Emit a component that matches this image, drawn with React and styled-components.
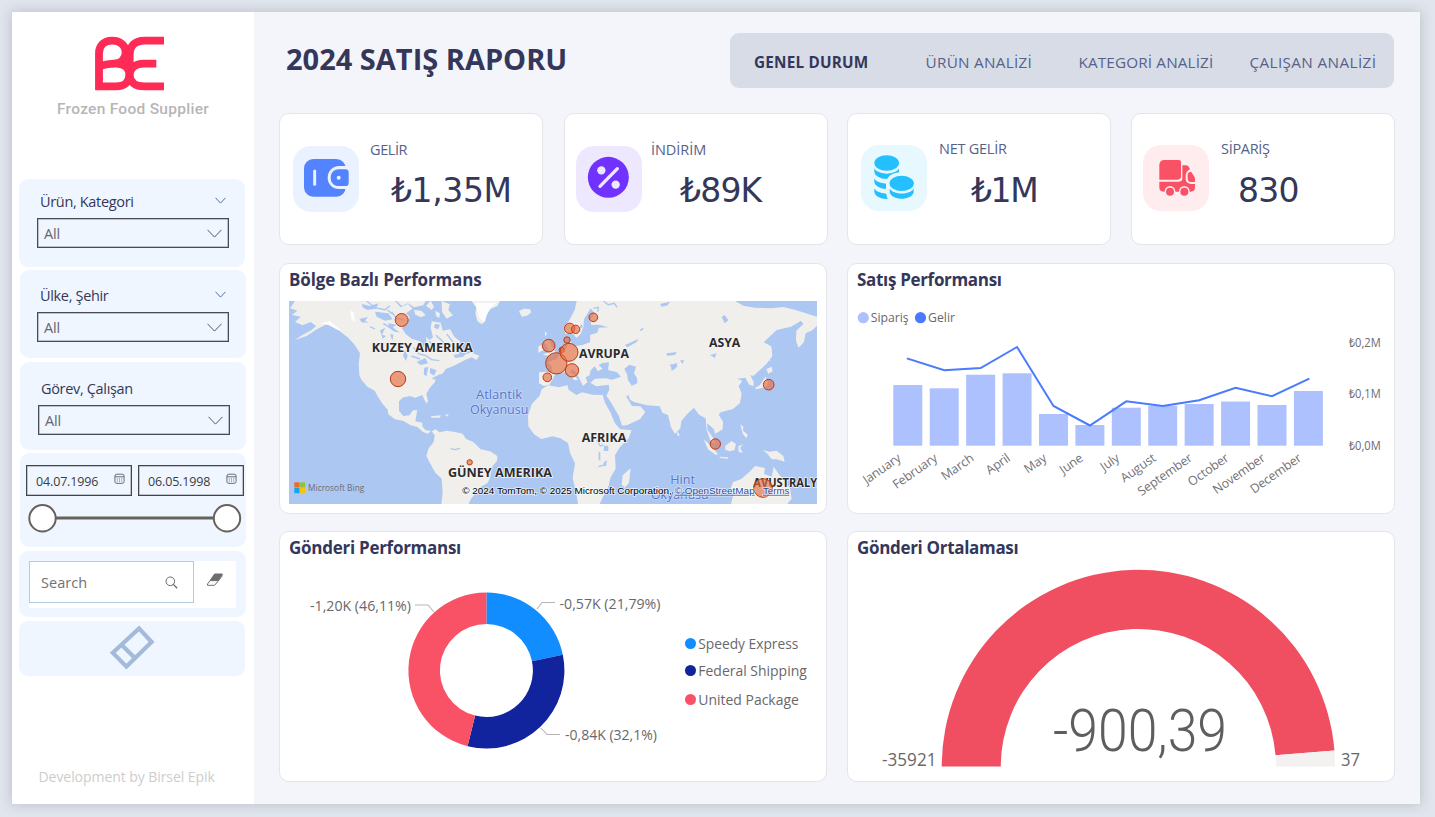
import React from "react";
import styled, { createGlobalStyle } from "styled-components";

const ui = `"Open Sans", "Noto Sans", sans-serif`;

const GlobalStyle = createGlobalStyle`
  * { box-sizing: border-box; }
  body { margin: 0; background: #e1e6ee; font-family: ${ui}; overflow: hidden; }
  svg { display: block; }
`;

const Page = styled.div`
  width: 1435px;
  height: 817px;
  padding: 12px 15px 13px 12px;
`;
const Report = styled.div`
  display: flex;
  width: 1408px;
  height: 792px;
  background: #f4f5fb;
  box-shadow: 0 0 12px 1px rgba(0, 0, 0, 0.16);
`;

/* ---------- sidebar ---------- */
const Sidebar = styled.aside`
  width: 242px;
  height: 100%;
  background: #fff;
  display: flex;
  flex-direction: column;
  padding-left: 7px;
`;
const Brand = styled.div`
  height: 167px;
  padding: 24px 0 0 38px;
`;
const BrandMark = styled.svg`
  width: 70px;
  height: 55px;
  margin-left: 37.5px;
`;
const BrandName = styled.div`
  margin-top: 8px;
  font: 500 15.5px/20px Roboto, sans-serif;
  letter-spacing: 0.28px;
  color: #b6b6b6;
  white-space: nowrap;
`;
const Panel = styled.section`
  width: ${(p) => p.$w || 226}px;
  height: ${(p) => p.$h}px;
  margin: 0 0 ${(p) => p.$gap || 0}px ${(p) => p.$shift || 0}px;
  padding: ${(p) => p.$pad || "0"};
  border-radius: 9px;
  background: #eff6ff;
  flex: none;
`;
const SlicerHead = styled.div`
  display: flex;
  justify-content: space-between;
  align-items: center;
  height: 20px;
  padding: 0 ${(p) => p.$end}px 0 ${(p) => p.$inset}px;
  font-size: 14.5px;
  line-height: 20px;
  letter-spacing: -0.33px;
  color: #34375a;
`;
const HeadArrow = styled.span`
  padding-bottom: 4px;
`;
const Select = styled.div`
  display: flex;
  align-items: center;
  justify-content: space-between;
  width: 192px;
  height: 30px;
  margin: ${(p) => p.$top}px 0 0 ${(p) => p.$left}px;
  padding: 1px 6px 0 6px;
  border: 1px solid #494b52;
  box-shadow: inset 0 0 0 0.5px #8d9096;
  font-size: 14.5px;
  letter-spacing: -0.2px;
  color: #66666a;
`;
const DateRow = styled.div`
  display: flex;
  gap: 6px;
`;
const DateBox = styled.div`
  display: flex;
  justify-content: space-between;
  width: 106px;
  height: 31px;
  padding: 6px 5px 0 9px;
  border: 1px solid #43454b;
  box-shadow: inset 0 0 0 0.5px #8d9096;
  font-size: 12.5px;
  line-height: 19px;
  letter-spacing: -0.15px;
  color: #3c3c40;
`;
const RangeSlider = styled.svg`
  width: 216px;
  height: 34px;
  margin-top: 5px;
`;
const SearchArea = styled.div`
  display: flex;
  width: 207px;
  height: 47px;
  background: #fff;
`;
const SearchBox = styled.div`
  display: flex;
  align-items: center;
  justify-content: space-between;
  width: 165px;
  height: 42px;
  padding: 0 15px 0 11px;
  border: 1px solid #b6cade;
  font-size: 14.5px;
  letter-spacing: 0.05px;
  color: #717175;
`;
const ClearSearch = styled.div`
  padding: 12px 0 0 12px;
`;
const Credit = styled.div`
  margin: 91px 0 0 19.5px;
  font-size: 14px;
  line-height: 20px;
  letter-spacing: -0.06px;
  color: #cdcdcd;
  white-space: nowrap;
`;

/* ---------- main area ---------- */
const Main = styled.main`
  flex: 1;
  padding: 21px 0 0 25px;
`;
const Header = styled.header`
  display: flex;
  justify-content: space-between;
  width: 1115px;
  height: 80px;
`;
const Title = styled.h1`
  margin: 6px 0 0 7px;
  font-size: 29px;
  line-height: 40px;
  font-weight: 700;
  letter-spacing: 0px;
  color: #34375a;
  white-space: nowrap;
`;
const Nav = styled.nav`
  display: grid;
  grid-template-columns: 171.5px 153px 171px 1fr;
  align-items: center;
  width: 664px;
  height: 55px;
  padding: 2px 0 0 24px;
  border-radius: 9px;
  background: #d8dce7;
`;
const NavItem = styled.a`
  font-size: 15.3px;
  font-weight: ${(p) => (p.$active ? 700 : 400)};
  letter-spacing: ${(p) => p.$ls}px;
  color: ${(p) => (p.$active ? "#34375a" : "#56628a")};
  white-space: nowrap;
`;
const KpiGrid = styled.div`
  display: grid;
  grid-template-columns: 285px 283px 284px 264px;
  height: 150px;
`;
const KpiCard = styled.article`
  display: flex;
  width: 264px;
  height: 132px;
  padding-left: ${(p) => p.$pad}px;
  border: 1px solid #e5e5e8;
  border-radius: 10px;
  background: #fff;
`;
const IconTile = styled.div`
  flex: none;
  width: 66px;
  height: 66px;
  margin-top: ${(p) => p.$top}px;
  border-radius: 18px;
  background: ${(p) => p.$bg};
`;
const KpiText = styled.div`
  padding: ${(p) => p.$top}px 0 0 ${(p) => p.$gap}px;
`;
const KpiLabel = styled.div`
  font-size: 14.5px;
  line-height: 20px;
  letter-spacing: ${(p) => p.$ls}px;
  color: #56628a;
  white-space: nowrap;
`;
const KpiValue = styled.div`
  margin: ${(p) => p.$top}px 0 0 ${(p) => p.$shift}px;
  font: 400 33px/40px "DejaVu Sans", Verdana, sans-serif;
  letter-spacing: ${(p) => p.$ls}px;
  color: #34375a;
  white-space: nowrap;
`;
const ChartGrid = styled.div`
  display: grid;
  grid-template-columns: 548px 548px;
  gap: 17px 20px;
`;
const ChartCard = styled.section`
  height: 251px;
  border: 1px solid #e5e5e8;
  border-radius: 10px;
  background: #fff;
  overflow: hidden;
`;
const ChartTitle = styled.h2`
  margin: 4px 0 9px 9px;
  font-size: 17px;
  line-height: 24px;
  font-weight: 700;
  letter-spacing: ${(p) => p.$ls}px;
  color: #34375a;
`;
const MapFrame = styled.svg`
  width: 528px;
  height: 203px;
  margin-left: 9px;
`;

/* ---------- small icons ---------- */
const Chevron = ({ w, h, color = "#5b6b85" }) => (
  <svg width={w} height={h} viewBox={`0 0 ${w} ${h}`}>
    <path d={`M0.5 0.8 L${w / 2} ${h - 0.9} L${w - 0.5} 0.8`} fill="none" stroke={color} strokeWidth="1" />
  </svg>
);
const CalendarIcon = () => (
  <svg width="12" height="13" viewBox="0 -1 12 13">
    <rect x="0.9" y="1.2" width="9.2" height="9.2" rx="2" fill="none" stroke="#5b5d66" strokeWidth="0.9" />
    <path d="M1 3.8H10" stroke="#5b5d66" strokeWidth="0.9" />
    <path d="M5 6H6M7.2 6H8.2M2.8 8.1H3.8M5 8.1H6M2.8 6H3.8M7.2 8.1H8.2" stroke="#5b5d66" strokeWidth="0.9" />
  </svg>
);
const SearchIcon = () => (
  <svg width="13" height="13" viewBox="0 0 13 13">
    <circle cx="5.3" cy="5.3" r="4.3" fill="none" stroke="#68686c" />
    <path d="M8.3 8.4L12.2 12.3" stroke="#68686c" strokeWidth="1.3" />
  </svg>
);
const SmallEraser = () => (
  <svg width="18" height="14" viewBox="0 0 18 14">
    <path d="M8.6 1H16.5L12 7.6H4.1Z" fill="#6e6e6e" stroke="#6e6e6e" strokeLinejoin="round" />
    <path d="M4.1 7.6L1.5 11V12.3H8.6L12 8.2L16.5 2.6" fill="none" stroke="#6e6e6e" strokeLinejoin="round" />
  </svg>
);
const BigEraser = () => (
  <svg width="46" height="46" viewBox="0 0 46 46">
    <path d="M30 3.4L42.6 17L17.4 41.6L3.8 27.8Z M12.6 19.8L26.4 33.6" fill="none" stroke="#a3bbd8" strokeWidth="4.2" />
  </svg>
);
const WalletIcon = () => (
  <svg width="66" height="66" viewBox="0 0 198 198">
    <rect x="33" y="39" width="125" height="113" rx="28" fill="#5483ff" />
    <path d="M172 60H139C118 60 104 76 104 95C104 114 118 129 139 129H172Z" fill="#ebf2ff" />
    <path d="M157 70H137C122 70 113 81 113 95C113 109 122 120 137 120H157Q167 120 167 110V80Q167 70 157 70Z" fill="#5483ff" />
    <circle cx="137" cy="95" r="6" fill="#ebf2ff" />
    <path d="M65 75V115" stroke="#ebf2ff" strokeWidth="9" strokeLinecap="round" />
  </svg>
);
const PercentIcon = () => (
  <svg width="66" height="66" viewBox="0 0 198 198">
    <circle cx="97" cy="94" r="61.5" fill="#7132ff" />
    <circle cx="76" cy="73" r="12.5" fill="#eee8ff" />
    <circle cx="119" cy="116" r="12.5" fill="#eee8ff" />
    <path d="M72 121L124 68" stroke="#eee8ff" strokeWidth="10" strokeLinecap="round" />
  </svg>
);
const CoinsIcon = () => (
  <svg width="66" height="66" viewBox="0 0 198 198">
    {[139, 109, 79].map((cy) => (
      <g key={cy}>
        <path d={`M40 ${cy - 14}V${cy}A37 23 0 0 0 114 ${cy}V${cy - 14}Z`} fill="#24bfff" />
        <ellipse cx="77" cy={cy - 15} rx="39" ry="22" fill="#e7f8ff" />
      </g>
    ))}
    <ellipse cx="77" cy="54" rx="37" ry="23" fill="#24bfff" />
    <path d="M75 115C77 94 92 82 122 82H170V172H88C80 165 75 150 75 140Z" fill="#e7f8ff" />
    <ellipse cx="122" cy="115" rx="36.5" ry="23" fill="#24bfff" />
    <path d="M86 131C98 150 146 150 158 131V142C152 168 92 168 86 142Z" fill="#24bfff" />
  </svg>
);
const TruckIcon = () => (
  <svg width="66" height="66" viewBox="0 0 198 198">
    <path d="M65 45H108Q114 45 114 51V94Q114 104 104 104H49V61Q49 45 65 45Z" fill="#f95165" />
    <path
      d="M118 61H128Q136 61 139 68L141 73Q129 78 128 92V103Q129 116 145 117H156V127Q156 140 143 140H62Q49 140 49 127V110H108Q118 110 118 100Z"
      fill="#f95165"
    />
    <path d="M134 88Q136 79 145 81L155 97Q156 98 156 111H143Q134 111 134 100Z" fill="#f95165" />
    {[81, 124].map((x) => (
      <g key={x}>
        <circle cx={x} cy="139" r="16" fill="#ffecee" />
        <circle cx={x} cy="140" r="12" fill="#f95165" />
      </g>
    ))}
  </svg>
);

const kpis = [
  { label: "GELİR", value: "₺1,35M", pad: 13, top: 32, bg: "#ebf2ff", Icon: WalletIcon, textTop: 26, gap: 11, shift: 21, valueTop: 11, ls: -0.4, vls: -0.4 },
  { label: "İNDİRİM", value: "₺89K", pad: 11, top: 32, bg: "#eee8ff", Icon: PercentIcon, textTop: 26, gap: 9, shift: 29, valueTop: 11, ls: -0.05, vls: -0.8 },
  { label: "NET GELİR", value: "₺1M", pad: 13, top: 31, bg: "#e7f8ff", Icon: CoinsIcon, textTop: 25, gap: 12, shift: 32, valueTop: 12, ls: -0.25, vls: -1.4 },
  { label: "SİPARİŞ", value: "830", pad: 11, top: 31, bg: "#ffecee", Icon: TruckIcon, textTop: 25, gap: 12, shift: 17, valueTop: 12, ls: -0.3, vls: -0.7 },
];

/* ---------- map ---------- */
const land = [
  "M45 123L30 145L52 152L36 165L62 170L45 186L68 196L92 186L108 198L95 210L66 226L44 240L80 228L110 208L140 193L165 202L185 218L203 232L222 252L240 280L236 312L238 345L243 358L262 380L284 392L296 414L308 432L323 449L325 463L345 478L370 483L392 496L412 501L430 517L444 521L453 513L437 511L427 499L427 488L406 484L409 465L412 451L399 451L388 466L370 468L357 452L357 424L368 413L389 408L406 413L427 405L433 419L440 431L444 424L439 402L449 384L465 366L467 350L489 340L497 327L520 318L545 305L557 299L575 292L590 300L598 287L575 278L540 284L525 262L542 245L523 230L510 208L488 212L482 188L455 184L452 205L459 232L448 240L438 230L440 250L430 262L420 244L395 236L377 222L366 205L380 190L390 172L378 160L398 146L384 132L362 142L345 123Z",
  "M455 514L467 508L478 517L500 512L525 516L548 521L558 537L580 546L602 568L630 574L652 588L651 602L635 622L630 655L622 670L600 682L590 697L573 716L566 732H484L488 700L485 656L466 638L448 606L439 588L445 566L461 546L464 526Z",
  "M575 123H660L652 138L632 147L620 164L616 184L605 193L592 184L586 160L589 143Z",
  "M717 153L732 146L750 148L754 157L741 167L725 170Z",
  "M805 376L838 382L862 375L866 389L889 405L906 397L938 404L968 405L975 428L991 457L1004 488L1020 507L1055 511L1046 535L1020 561L1005 586L1007 626L992 652L985 681L969 710L959 732H894L888 695L878 655L885 610L870 579L864 549L841 535L818 529L784 537L762 523L745 499L744 466L756 431L779 407L785 388Z",
  "M1052 625L1047 668L1034 684L1025 673L1028 646Z",
  "M777 337L799 335L827 339L818 358L808 374L792 378L777 370Z",
  "M788 284L808 275L799 256L791 244L808 240L815 259L828 279L809 288Z",
  "M776 258L788 254L790 270L774 279Z",
  "M795 214L801 221L795 230Z",
];
const eurasia =
  "M818 340L815 318L803 307L829 298L842 278L860 265L863 248L873 244L879 259L905 256L930 247L931 224L952 218L956 203L985 202L957 194L934 195L931 179L943 159L932 145L912 178L910 202L902 222L889 234L878 219L857 222L851 202L867 182L884 150L890 123H1365L1390 137L1425 143L1474 145L1511 141L1549 151L1611 170V197L1597 211L1577 220L1572 246L1556 263L1548 243L1549 212L1570 192L1563 182L1533 200L1490 210L1451 247L1474 259L1477 288L1459 312L1439 331L1421 347L1411 346L1421 366L1421 378L1408 374L1396 353L1372 356L1387 363L1376 378L1385 401L1380 429L1359 447L1322 457L1316 464L1329 485L1328 508L1305 522L1302 508L1282 490L1282 509L1299 533L1305 552L1292 544L1280 510L1277 475L1257 464L1242 443L1221 463L1204 483L1201 505L1185 522L1173 502L1164 465L1147 458L1139 439L1101 436L1062 426L1050 419L1045 404L1039 410L1056 438L1081 439L1096 456L1080 478L1042 495L1026 497L1017 469L994 429L979 407L988 389L986 374L949 379L931 368L945 356L978 355L996 359L1023 350L1011 337L984 330L987 307L967 309L956 316L968 326L954 334L944 319L932 331L929 346L917 352L922 367L909 378L899 357L889 338L876 327L870 336L886 350L894 359L884 361L871 349L856 336L835 342Z";
const isles = [
  "M1271 538L1294 558L1314 583L1308 585L1284 568Z",
  "M1318 590L1345 592L1343 596L1320 594Z",
  "M1336 557L1355 543L1368 552L1363 571L1348 574L1336 569Z",
  "M1375 559L1390 553L1380 563L1389 578L1376 576Z",
  "M1448 570L1467 575L1490 572L1510 588L1514 605L1490 598L1475 598L1463 582Z",
  "M1381 493L1390 500L1389 512L1403 524L1399 535L1388 521Z",
  "M1459 327L1475 320L1478 334L1465 341Z",
  "M1456 350L1464 367L1458 381L1430 388L1424 384L1440 375Z",
  "M1189 511L1200 526L1193 529Z",
  "M1455 258L1463 270L1470 305L1457 289Z",
  "M1353 732L1360 705L1352 685L1359 666L1384 657L1408 636L1425 618L1455 624L1452 642L1475 650L1481 620L1498 644L1508 655L1530 686L1535 716L1522 732Z",
  "M452 469L482 466L480 473L455 473Z",
  "M495 463L507 464L500 470Z",
  "M485 123L510 133L505 150L519 166L500 176L486 156Z",
  "M452 122L462 140L455 150L438 137Z",
  "M350 123L366 138L384 130L402 142L430 136L437 123Z",
  "M402 150L424 152L437 165L424 172L406 164Z",
  "M466 152L480 160L478 174L468 168Z",
];
const lakes = [
  "M245 132L270 138L295 130L288 146L262 150L248 142Z",
  "M285 155L325 160L338 178L315 182L290 170Z",
  "M325 190L350 194L338 202L360 218L340 214L326 202Z",
  "M238 177L264 171L255 182L266 188L245 187Z",
  "M300 211L316 203L306 224L318 228L308 237Z",
  "M330 222L340 224L337 242Z",
  "M410 306L436 294L444 310L422 315Z",
  "M433 323L445 321L439 350L431 342Z",
  "M450 324L470 331L462 347L450 339Z",
  "M457 354L480 343L478 350L460 359Z",
  "M374 269L383 287L378 303L369 288Z",
  "M465 191L480 194L474 208L462 203Z",
  "M520 285L560 278L550 290L526 294Z",
  "M1033 327L1048 314L1068 320L1062 340L1071 354L1072 370L1055 377L1044 360L1041 343Z",
  "M1172 315L1192 309L1188 324L1175 333Z",
  "M1325 171L1334 165L1345 181L1334 190Z",
  "M1035 255L1075 237L1070 246L1042 262Z",
  "M1160 280L1190 276L1185 285L1161 287Z",
  "M972 557L985 557L985 573L971 573Z",
  "M956 576L961 577L961 602L956 600Z",
  "M970 608L982 600L975 622Z",
  "M1290 285L1310 280L1304 294Z",
  "M1200 302L1212 299L1208 312Z",
  "M1140 132L1170 125L1163 136L1145 140Z",
  "M902 193L908 197L906 205L900 203Z",
];
const pins = [
  [365, 180, 19.5], [354, 357, 23], [569, 607, 8], [806, 257, 19], [829, 310, 32], [802, 352, 13],
  [869, 205, 15.5], [887, 208, 12.5], [940, 172, 13], [861, 240, 9.5], [845, 270, 8], [867, 277, 27],
  [876, 331, 20], [1466, 374, 16], [1306, 552, 15.5], [1449, 684, 28],
];
const MapLabel = ({ x, y, w, water, children }) => (
  <text
    x={x} y={y} textLength={w} lengthAdjust="spacingAndGlyphs"
    fontSize="39" fontWeight={water ? 400 : 700}
    fill={water ? "#5576ce" : "#2b2b2e"} stroke={water ? "#c5d7f6" : "#f5f5f3"} strokeWidth="5"
    strokeLinejoin="round" paintOrder="stroke"
  >
    {children}
  </text>
);
const BubbleMap = () => (
  <MapFrame viewBox="27 123 1584 609">
    <rect x="27" y="123" width="1584" height="609" fill="#abc7f2" />
    <g fill="#f0efeb">
      {land.map((d) => <path key={d} d={d} />)}
      <path d={eurasia} />
      {isles.map((d) => <path key={d} d={d} />)}
    </g>
    <g fill="#abc7f2">{lakes.map((d) => <path key={d} d={d} />)}</g>
    <path d="M120 190L150 183L185 212L172 209L145 195ZM211 151L221 157L225 187L214 178Z" fill="#fdfdfd" />
    <path d="M585 128H650L628 146L612 186L597 174L591 148Z" fill="#fdfdfd" />
    <g fill="none" stroke="#abc7f2" strokeWidth="4">
      <path d="M260 123L285 143L315 149L330 137M335 156L350 175L372 180M310 190L333 205M342 165L322 150M270 200L285 207M400 262L417 282L438 287L455 299L478 302M394 288L420 297M448 243L465 269L490 275M468 226L490 246L505 275M500 222L520 247" />
      <path d="M920 190L933 206L925 220M940 145L955 142L953 155M970 123L985 134L1003 130L1011 142M540 565L525 569L512 566M950 540L961 558L970 555M955 620L979 613M1090 205L1080 212M1170 315L1192 320" />
    </g>
    <MapLabel x={275} y={276} w={303}>KUZEY AMERIKA</MapLabel>
    <MapLabel x={504} y={652} w={312}>GÜNEY AMERIKA</MapLabel>
    <MapLabel x={897} y={295} w={150}>AVRUPA</MapLabel>
    <MapLabel x={1287} y={262} w={94}>ASYA</MapLabel>
    <MapLabel x={905} y={546} w={134}>AFRIKA</MapLabel>
    <MapLabel x={1420} y={682} w={214}>AVUSTRALYA</MapLabel>
    <MapLabel water x={588} y={418} w={138}>Atlantik</MapLabel>
    <MapLabel water x={570} y={461} w={175}>Okyanusu</MapLabel>
    <MapLabel water x={1171} y={671} w={74}>Hint</MapLabel>
    <MapLabel water x={1113} y={716} w={173}>Okyanusu</MapLabel>
    <g fill="#e86c3f" fillOpacity="0.64" stroke="#b83c12" strokeWidth="3">
      {pins.map(([x, y, r]) => <circle key={`${x}-${y}`} cx={x} cy={y} r={r} />)}
    </g>
    <rect x="43" y="667" width="15.5" height="15.5" fill="#f1662a" />
    <rect x="60" y="667" width="15.5" height="15.5" fill="#8bc34a" />
    <rect x="43" y="684" width="15.5" height="15.5" fill="#12a6f0" />
    <rect x="60" y="684" width="15.5" height="15.5" fill="#fbc012" />
    <text x="84" y="693" fontSize="29" textLength="169" lengthAdjust="spacingAndGlyphs" fill="#6c6f75">Microsoft Bing</text>
    <g fontSize="28" fontFamily="'Liberation Sans', sans-serif" strokeWidth="5" paintOrder="stroke" stroke="#fff" strokeOpacity="0.65">
      <text x="547" y="701" textLength="628" lengthAdjust="spacingAndGlyphs" fill="#000">© 2024 TomTom, © 2025 Microsoft Corporation,</text>
      <text x="1184" y="701" textLength="240" lengthAdjust="spacingAndGlyphs" fill="#2d4da0" textDecoration="underline">© OpenStreetMap</text>
      <text x="1449" y="701" textLength="79" lengthAdjust="spacingAndGlyphs" fill="#2d4da0" textDecoration="underline">Terms</text>
    </g>
  </MapFrame>
);

/* ---------- combo chart ---------- */
const months = [
  ["January", 385, 358.7], ["February", 388.3, 370.3], ["March", 374.7, 368], ["April", 373.3, 347],
  ["May", 414, 406], ["June", 425, 425.5], ["July", 407.7, 401.3], ["August", 405.7, 406],
  ["September", 404, 400.2], ["October", 401.5, 387.7], ["November", 405, 396.2], ["December", 391, 379],
];
const ComboChart = () => (
  <svg width="546" height="212" viewBox="848 301 546 212">
    <circle cx="863.3" cy="317.7" r="5.6" fill="#aec1ff" />
    <text x="870.7" y="322.3" fontSize="13" textLength="38" lengthAdjust="spacingAndGlyphs" fill="#68686c">Sipariş</text>
    <circle cx="920.5" cy="317.7" r="5.6" fill="#4a7bff" />
    <text x="928" y="322.3" fontSize="13" textLength="27" lengthAdjust="spacingAndGlyphs" fill="#68686c">Gelir</text>
    {months.map(([name, top], i) => (
      <g key={name}>
        <rect x={893.3 + i * 36.42} y={top} width="29" height={445.7 - top} fill="#aec1ff" />
        <text
          transform={`translate(${901.8 + i * 36.42} 460) rotate(-35)`}
          textAnchor="end" fontSize="12.5" letterSpacing="-0.15" fill="#717175"
        >
          {name}
        </text>
      </g>
    ))}
    <polyline
      points={months.map(([, , y], i) => `${907.8 + i * 36.42},${y}`).join(" ")}
      fill="none" stroke="#4a7bff" strokeWidth="2" strokeLinecap="square"
    />
    {[["₺0,2M", 347.3], ["₺0,1M", 398.3], ["₺0,0M", 450]].map(([t, y]) => (
      <text key={t} x="1348.7" y={y} fontSize="12.5" textLength="32" lengthAdjust="spacingAndGlyphs" fill="#6c6c70">{t}</text>
    ))}
  </svg>
);

/* ---------- donut ---------- */
const polar = (cx, cy, r, deg) => {
  const a = ((deg - 90) * Math.PI) / 180;
  return `${(cx + r * Math.cos(a)).toFixed(2)} ${(cy + r * Math.sin(a)).toFixed(2)}`;
};
const ring = (cx, cy, R, r, a, b) => {
  const big = b - a > 180 ? 1 : 0;
  return `M${polar(cx, cy, R, a)}A${R} ${R} 0 ${big} 1 ${polar(cx, cy, R, b)}L${polar(cx, cy, r, b)}A${r} ${r} 0 ${big} 0 ${polar(cx, cy, r, a)}Z`;
};
const carriers = [
  { name: "Speedy Express", color: "#118dff", from: 0, to: 78.4, y: 644, w: 100 },
  { name: "Federal Shipping", color: "#12239e", from: 78.4, to: 194, y: 671, w: 108.5 },
  { name: "United Package", color: "#f95165", from: 194, to: 360, y: 700, w: 100.5 },
];
const DonutChart = () => (
  <svg width="546" height="212" viewBox="280 569 546 212">
    {carriers.map((c) => (
      <g key={c.name}>
        <path d={ring(486.4, 670.5, 78, 46.5, c.from, c.to)} fill={c.color} />
        <circle cx="690.5" cy={c.y - 0.5} r="5.5" fill={c.color} />
        <text x="698.3" y={c.y + 5} fontSize="15" textLength={c.w} lengthAdjust="spacingAndGlyphs" fill="#68686c">{c.name}</text>
      </g>
    ))}
    <path d="M415 605H428L434 612M537 609L542 602.5H555M541 728L547 734.5H560" fill="none" stroke="#b5b5b8" strokeWidth="1.1" />
    <g fontSize="14.7" fill="#68686c">
      <text x="310" y="610.5" textLength="101" lengthAdjust="spacingAndGlyphs">-1,20K (46,11%)</text>
      <text x="559.5" y="608.7" textLength="101" lengthAdjust="spacingAndGlyphs">-0,57K (21,79%)</text>
      <text x="565" y="739.7" textLength="92" lengthAdjust="spacingAndGlyphs">-0,84K (32,1%)</text>
    </g>
  </svg>
);

const Gauge = () => (
  <svg width="546" height="212" viewBox="848 569 546 212">
    <path d={ring(1138.4, 766.5, 196.7, 137.6, -90, 85.31)} fill="#f04f61" />
    <path d={ring(1138.4, 766.5, 196.7, 137.6, 85.31, 90)} fill="#f3f2f1" />
    <text x="882" y="766" fontSize="17.5" textLength="54.5" lengthAdjust="spacingAndGlyphs" fill="#68686c">-35921</text>
    <text x="1341" y="766" fontSize="17.5" textLength="19" lengthAdjust="spacingAndGlyphs" fill="#68686c">37</text>
    <text x="1053" y="751.3" fontSize="60" fontWeight="300" fontFamily="Roboto, sans-serif" textLength="174" lengthAdjust="spacingAndGlyphs" fill="#605e5c">-900,39</text>
  </svg>
);

const Slicer = ({ title, inset, end = 20, selectTop = 6, selectLeft = 18, arrow }) => (
  <>
    <SlicerHead $inset={inset} $end={end}>
      {title}
      {arrow && <HeadArrow><Chevron w={11} h={7} color="#4f7396" /></HeadArrow>}
    </SlicerHead>
    <Select $top={selectTop} $left={selectLeft}>
      All
      <Chevron w={15} h={9} color="#55585f" />
    </Select>
  </>
);

export default function App() {
  return (
    <Page>
      <GlobalStyle />
      <Report>
        <Sidebar>
          <Brand>
            <BrandMark viewBox="284 108 210 165">
              <g fill="none" stroke="#ff2a55" strokeWidth="23.5">
                <path d="M296 270V160C296 135 312 122 336 122C361 122 376 138 376 156C376 178 362 190 340 191C322 192 308 194 298 200M298 198C315 193 335 190 350 191C375 193 387 208 387 224C387 246 372 259 348 259H285" />
                <path d="M491 122H432C404 122 388 138 388 164C388 174 388 184 388 198M468 191H430C405 191 388 205 388 225C388 246 405 259 432 259H491" />
              </g>
            </BrandMark>
            <BrandName>Frozen Food Supplier</BrandName>
          </Brand>
          <Panel $h={88} $gap={3} $pad="13px 0 0">
            <Slicer title="Ürün, Kategori" inset={21} end={19} arrow />
          </Panel>
          <Panel $h={88} $gap={4} $shift={1} $pad="16px 0 0">
            <Slicer title="Ülke, Şehir" inset={20} selectLeft={17} arrow />
          </Panel>
          <Panel $h={88} $gap={3} $shift={1} $pad="17px 0 0">
            <Slicer title="Görev, Çalışan" inset={21} />
          </Panel>
          <Panel $h={94} $gap={4} $shift={1} $pad="12px 0 0 6px">
            <DateRow>
              <DateBox>04.07.1996 <CalendarIcon /></DateBox>
              <DateBox>06.05.1998 <CalendarIcon /></DateBox>
            </DateRow>
            <RangeSlider viewBox="0 0 216 34">
              <path d="M16 17H201" stroke="#68625f" strokeWidth="3" />
              <circle cx="16.5" cy="17.3" r="13.2" fill="#fff" stroke="#68625f" strokeWidth="2" />
              <circle cx="201" cy="17.3" r="13.2" fill="#fff" stroke="#68625f" strokeWidth="2" />
            </RangeSlider>
          </Panel>
          <Panel $w={227} $h={66} $gap={4} $pad="10px 0 0 10px">
            <SearchArea>
              <SearchBox>Search <SearchIcon /></SearchBox>
              <ClearSearch><SmallEraser /></ClearSearch>
            </SearchArea>
          </Panel>
          <Panel $h={55} $pad="4px 0 0 90px">
            <BigEraser />
          </Panel>
          <Credit>Development by Birsel Epik</Credit>
        </Sidebar>
        <Main>
          <Header>
            <Title>2024 SATIŞ RAPORU</Title>
            <Nav>
              <NavItem $active $ls={0.2}>GENEL DURUM</NavItem>
              <NavItem $ls={0.27}>ÜRÜN ANALİZİ</NavItem>
              <NavItem $ls={0.13}>KATEGORİ ANALİZİ</NavItem>
              <NavItem $ls={0.37}>ÇALIŞAN ANALİZİ</NavItem>
            </Nav>
          </Header>
          <KpiGrid>
            {kpis.map(({ Icon, ...k }) => (
              <KpiCard key={k.label} $pad={k.pad}>
                <IconTile $top={k.top} $bg={k.bg}><Icon /></IconTile>
                <KpiText $top={k.textTop} $gap={k.gap}>
                  <KpiLabel $ls={k.ls}>{k.label}</KpiLabel>
                  <KpiValue $top={k.valueTop} $shift={k.shift} $ls={k.vls}>{k.value}</KpiValue>
                </KpiText>
              </KpiCard>
            ))}
          </KpiGrid>
          <ChartGrid>
            <ChartCard>
              <ChartTitle $ls={-0.15}>Bölge Bazlı Performans</ChartTitle>
              <BubbleMap />
            </ChartCard>
            <ChartCard>
              <ChartTitle $ls={-0.32}>Satış Performansı</ChartTitle>
              <ComboChart />
            </ChartCard>
            <ChartCard>
              <ChartTitle $ls={-0.27}>Gönderi Performansı</ChartTitle>
              <DonutChart />
            </ChartCard>
            <ChartCard>
              <ChartTitle $ls={-0.32}>Gönderi Ortalaması</ChartTitle>
              <Gauge />
            </ChartCard>
          </ChartGrid>
        </Main>
      </Report>
    </Page>
  );
}
